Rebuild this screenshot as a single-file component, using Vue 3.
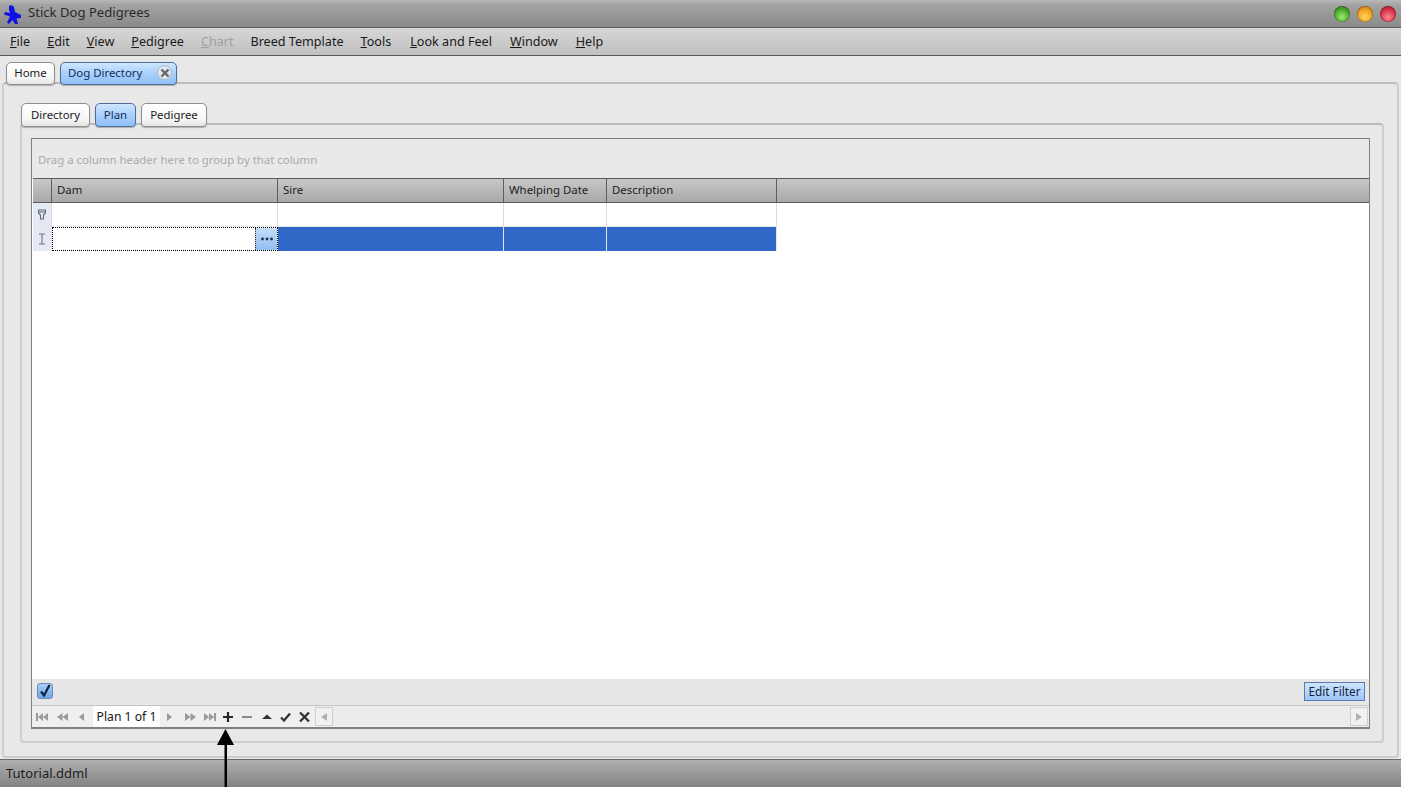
<script setup>
const menus = [
  { k: 'F', r: 'ile' }, { k: 'E', r: 'dit' }, { k: 'V', r: 'iew' }, { k: 'P', r: 'edigree' },
  { k: 'C', r: 'hart', off: true }, { k: '', r: 'Breed Template' }, { k: 'T', r: 'ools' },
  { k: 'L', r: 'ook and Feel' }, { k: 'W', r: 'indow' }, { k: 'H', r: 'elp' }
]
const heads = ['Dam', 'Sire', 'Whelping Date', 'Description']
</script>

<template>
  <div class="app">
    <header class="title">
      <svg class="logo" width="20" height="21" viewBox="0 0 20 21">
        <path d="M7 2 Q10 0 12 3 L13 8 L19 11 L19 14 L14.5 14.5 L16 20 L13 20 L10.5 16 L7 20 L5 18.5 L8 12.5 L2 10.5 L3 8 L8 9 L7 6 Z" fill="#1010e8" />
      </svg>
      <span class="title-text">Stick Dog Pedigrees</span>
      <div class="lights">
        <i class="light green"></i><i class="light orange"></i><i class="light red"></i>
      </div>
    </header>

    <nav class="menu">
      <span v-for="m in menus" :key="m.r" class="mi" :class="{ off: m.off }"><u>{{ m.k }}</u>{{ m.r }}</span>
    </nav>

    <main class="body">
      <div class="tabs outer-tabs">
        <div class="tab t-home">Home</div>
        <div class="tab on t-dog">Dog Directory
          <span class="close">
            <svg width="10" height="10" viewBox="0 0 10 10"><path d="M1.5 1.5 L8.5 8.5 M8.5 1.5 L1.5 8.5" stroke="#666" stroke-width="2.4" /></svg>
          </span>
        </div>
      </div>
      <section class="outer">
        <div class="tabs inner-tabs">
          <div class="tab t-dir">Directory</div>
          <div class="tab on t-plan">Plan</div>
          <div class="tab t-ped">Pedigree</div>
        </div>
        <section class="inner">
          <div class="grid">
            <div class="group">Drag a column header here to group by that column</div>
            <div class="row head">
              <div class="c rh"></div>
              <div v-for="h in heads" :key="h" class="c">{{ h }}</div>
              <div class="c fill"></div>
            </div>
            <div class="rows">
              <div class="row data">
                <div class="c rh">
                  <svg width="8" height="11" viewBox="0 0 8 11"><path d="M.5 1 H7.5 V4 L5.5 6 V10 H2.5 V6 L.5 4 Z M.5 3 H7.5" fill="none" stroke="#5f6b78" stroke-width="1.1" /></svg>
                </div>
                <div class="c"></div><div class="c"></div><div class="c"></div><div class="c"></div>
              </div>
              <div class="row data sel">
                <div class="c rh">
                  <svg width="8" height="12" viewBox="0 0 8 12"><path d="M1 1 H7 M4 1 V11 M1 11 H7" fill="none" stroke="#6f7780" stroke-width="1.1" /></svg>
                </div>
                <div class="c editor">
                  <span class="ell">
                    <svg width="14" height="4" viewBox="0 0 14 4" fill="#1c3050"><circle cx="2.5" cy="2" r="1.4" /><circle cx="7" cy="2" r="1.4" /><circle cx="11.5" cy="2" r="1.4" /></svg>
                  </span>
                </div>
                <div class="c"></div><div class="c"></div><div class="c"></div>
              </div>
            </div>
            <div class="filter">
              <span class="check">
                <svg width="14" height="14" viewBox="0 0 14 14"><path d="M3 7.5 L6 11.5 L11.5 1" fill="none" stroke="#12203a" stroke-width="2.2" /></svg>
              </span>
              <button class="edit">Edit Filter</button>
            </div>
            <div class="nav">
              <div class="icons">
                <svg class="ic" width="12" height="10" viewBox="0 0 12 10" fill="#9a9a9a"><path d="M0 1H2V9H0ZM7 1V9L2 5ZM12 1V9L7 5Z" /></svg>
                <svg class="ic g1" width="11" height="10" viewBox="0 0 11 10" fill="#9a9a9a"><path d="M5.5 1V9L0 5ZM11 1V9L5.5 5Z" /></svg>
                <svg class="ic g2" width="6" height="10" viewBox="0 0 6 10" fill="#9a9a9a"><path d="M6 1V9L1 5Z" /></svg>
              </div>
              <span class="plan">Plan 1 of 1</span>
              <div class="icons after">
                <svg class="ic" width="6" height="10" viewBox="0 0 6 10" fill="#9a9a9a"><path d="M0 1V9L5 5Z" /></svg>
                <svg class="ic g3" width="11" height="10" viewBox="0 0 11 10" fill="#9a9a9a"><path d="M0 1V9L5.5 5ZM5.5 1V9L11 5Z" /></svg>
                <svg class="ic g4" width="12" height="10" viewBox="0 0 12 10" fill="#9a9a9a"><path d="M0 1V9L5 5ZM5 1V9L10 5ZM10 1H12V9H10Z" /></svg>
                <svg class="ic g5" width="10" height="10" viewBox="0 0 10 10"><path d="M5 0V10M0 5H10" stroke="#262626" stroke-width="2.2" /></svg>
                <svg class="ic g6" width="12" height="10" viewBox="0 0 12 10"><path d="M1 5H11" stroke="#8a8a8a" stroke-width="2" /></svg>
                <svg class="ic g7" width="10" height="10" viewBox="0 0 10 10" fill="#333"><path d="M5 2.5L10 7H0Z" /></svg>
                <svg class="ic g8" width="11" height="10" viewBox="0 0 11 10"><path d="M1 5.5L4 8.5L10 1.5" fill="none" stroke="#333" stroke-width="2.3" /></svg>
                <svg class="ic g9" width="11" height="10" viewBox="0 0 11 10"><path d="M1 .5L10 9.5M10 .5L1 9.5" stroke="#333" stroke-width="2.3" /></svg>
              </div>
              <div class="scroll">
                <span class="sbtn"><svg width="6" height="8" viewBox="0 0 6 8" fill="#b0b0b0"><path d="M6 0V8L0 4Z" /></svg></span>
                <span class="track"></span>
                <span class="sbtn"><svg width="6" height="8" viewBox="0 0 6 8" fill="#b0b0b0"><path d="M0 0V8L6 4Z" /></svg></span>
              </div>
            </div>
          </div>
        </section>
      </section>
    </main>

    <footer class="status">Tutorial.ddml</footer>

    <svg class="arrow" width="20" height="58" viewBox="0 0 20 58">
      <path d="M9.5 0L18 16H11V58H8.5V16H1Z" fill="#000" />
    </svg>
  </div>
</template>

<style scoped>
.app {
  position: relative;
  width: 1401px;
  height: 787px;
  overflow: hidden;
  font-family: "Noto Sans", "Open Sans", sans-serif;
  font-size: 11.4px;
  color: #1c1c1c;
  display: flex;
  flex-direction: column;
  background: #e8e8e8;
}
.title {
  height: 27px;
  flex: none;
  display: flex;
  align-items: center;
  padding-left: 2px;
  background: linear-gradient(#b8b8b8, #a2a2a2 20%, #8a8a8a);
  border-bottom: 1px solid #5c5c5c;
}
.logo { margin-top: 2px; flex: none; }
.title-text { margin: 0 0 3px 6px; color: #2a2a2a; font-size: 13.1px; }
.lights { margin-left: auto; display: flex; gap: 7px; padding-right: 5px; }
.light { width: 16px; height: 16px; border-radius: 50%; display: block; box-shadow: inset 0 0 0 1px rgba(0,0,0,.25); }
.green { background: radial-gradient(circle at 50% 70%, #a2e872, #4aa92a 55%, #2f6f22); }
.orange { background: radial-gradient(circle at 50% 70%, #ffd75c, #f0a020 55%, #b86f18); }
.red { background: radial-gradient(circle at 50% 70%, #ff8a90, #d9304a 55%, #98202e); }

.menu {
  height: 27px;
  flex: none;
  display: flex;
  align-items: center;
  padding-left: 10px;
  gap: 17px;
  background: linear-gradient(#d6d6d6, #c0c0c0);
  border-bottom: 1px solid #565656;
  font-size: 12.6px;
}
.mi { white-space: nowrap; color: #1a1a1a; }
.mi.off { color: #a0a0a0; }
.mi:nth-child(8) { margin-left: 2px; }
.mi:nth-child(9) { margin-left: 1px; }
.mi:nth-child(10) { margin-left: 1px; }

.body { flex: 1; display: flex; flex-direction: column; min-height: 0; padding: 6px 2px 1px; position: relative; }
.tabs { display: flex; position: relative; z-index: 1; }
.outer-tabs { padding-left: 4px; gap: 5px; height: 23px; }
.tab {
  height: 23px;
  box-sizing: border-box;
  display: flex;
  align-items: center;
  justify-content: center;
  padding-bottom: 2px;
  border: 1px solid #8e8e8e;
  border-radius: 5px 5px 4px 4px;
  background: linear-gradient(#ffffff, #f6f6f6 70%, #e4e4e4);
  box-shadow: 0 1px 1px rgba(0,0,0,.25);
}
.tab.on {
  background: linear-gradient(#cfe6ff, #a9d0fb 50%, #8fc1f8);
  border-color: #4e6d98;
  color: #142c58;
}
.t-home { width: 49px; }
.t-dog { width: 117px; justify-content: flex-start; padding-left: 7px; }
.close {
  width: 15px; height: 15px; margin-left: 15px; border-radius: 50%;
  background: #dfe6ef; border: 1px solid #a8b4c2; box-sizing: border-box;
  display: flex; align-items: center; justify-content: center;
}
.inner-tabs .tab { height: 24px; }
.t-dir { width: 69px; }
.t-plan { width: 41px; }
.t-ped { width: 66px; }
.outer {
  flex: 1;
  margin-top: -3px;
  min-height: 0;
  display: flex;
  flex-direction: column;
  box-sizing: border-box;
  border: 2px solid #cdcdcd;
  border-top-color: #bcbcbc;
  border-radius: 4px;
  padding: 19px 13px 13px 16px;
}
.inner-tabs { gap: 5px; padding-left: 1px; height: 24px; }
.inner {
  flex: 1;
  margin-top: -4px;
  min-height: 0;
  display: flex;
  box-sizing: border-box;
  border: 2px solid #cdcdcd;
  border-top-color: #bcbcbc;
  border-radius: 4px;
  padding: 13px 12px 12px 9px;
}
.grid {
  flex: 1;
  min-width: 0;
  display: flex;
  flex-direction: column;
  border: 1px solid #808080;
  border-bottom-width: 2px;
  background: #fff;
}
.group {
  height: 39px;
  flex: none;
  box-sizing: border-box;
  padding: 13px 6px 0;
  color: #aaaaaa;
  background: #e9e9e9;
}
.row {
  display: grid;
  grid-template-columns: 19px 226px 226px 103px 170px 1fr;
  margin-left: 1px;
}
.head {
  height: 25px;
  flex: none;
  box-sizing: border-box;
  border-top: 1px solid #5a5a5a;
  border-bottom: 1px solid #5a5a5a;
  background: linear-gradient(#c8c8c8, #a8a8a8);
}
.head .c {
  border-right: 1px solid #5e5e5e;
  padding-left: 5px;
  line-height: 21px;
  box-sizing: border-box;
}
.head .c.fill { border-right: 0; }
.rows { flex: 1; background: #fff; min-height: 0; }
.data { height: 24px; }
.data .c {
  box-sizing: border-box;
  border-right: 1px solid #dadada;
  border-bottom: 1px solid #e6e6e6;
  background: #fff;
}
.data .c.rh {
  background: #e4e9f4;
  display: flex;
  align-items: center;
  justify-content: center;
  padding-right: 1px;
}
.sel .c { background: #2f68c6; border-right-color: #dfe6f2; border-bottom: 0; }
.data.sel .c:not(.rh):not(.editor) { background: #2f68c6; }
.data.sel .editor {
  background: #fff;
  border: 1px dotted #000;
  display: flex;
  justify-content: flex-end;
}
.ell {
  width: 21px;
  background: linear-gradient(#c4def8, #90bdf0);
  border-left: 1px dotted #333;
  display: flex;
  align-items: center;
  justify-content: center;
}
.filter {
  height: 27px;
  flex: none;
  box-sizing: border-box;
  display: flex;
  align-items: center;
  justify-content: space-between;
  background: #e7e7e7;
  padding: 0 4px 2px 5px;
  border-bottom: 1px solid #c4c4c4;
}
.check {
  width: 16px; height: 16px; box-sizing: border-box;
  border: 1px solid #6d8bb8; border-radius: 3px;
  background: linear-gradient(#a9cdf7, #6ea4ea);
  display: flex; align-items: center; justify-content: center;
}
.edit {
  width: 61px; height: 19px; padding: 0;
  font: inherit;
  font-size: 11.8px;
  color: #14243f;
  border: 1px solid #5a7bab;
  background: linear-gradient(#cfe4fd, #9cc6f6);
}
.nav {
  height: 21px;
  flex: none;
  display: flex;
  align-items: center;
  padding-left: 4px;
  background: #efefef;
}
.icons { display: flex; align-items: center; }
.ic { flex: none; }
.g1 { margin-left: 9px; }
.g2 { margin-left: 10px; }
.plan {
  margin-left: 9px;
  width: 67px;
  height: 21px;
  line-height: 21px;
  text-align: center;
  background: #fff;
  color: #161616;
  font-size: 12.2px;
}
.after { margin-left: 7px; }
.g3 { margin-left: 12px; }
.g4 { margin-left: 8px; }
.g5 { margin-left: 7px; }
.g6 { margin-left: 8px; }
.g7 { margin-left: 9px; }
.g8 { margin-left: 8px; }
.g9 { margin-left: 8px; }
.scroll { flex: 1; display: flex; height: 19px; margin: 0 1px 0 5px; }
.sbtn {
  width: 18px;
  box-sizing: border-box;
  border: 1px solid #cfcfcf;
  background: #f0f0f0;
  display: flex; align-items: center; justify-content: center;
}
.track { flex: 1; background: #ececec; }

.status {
  height: 28px;
  flex: none;
  box-sizing: border-box;
  padding: 4px 0 0 6px;
  border-top: 1px solid #6a6a6a;
  background: linear-gradient(#b0b0b0, #828282);
  color: #1c1c1c;
  font-size: 13px;
}
.arrow { position: absolute; left: 216px; top: 729px; }
</style>
